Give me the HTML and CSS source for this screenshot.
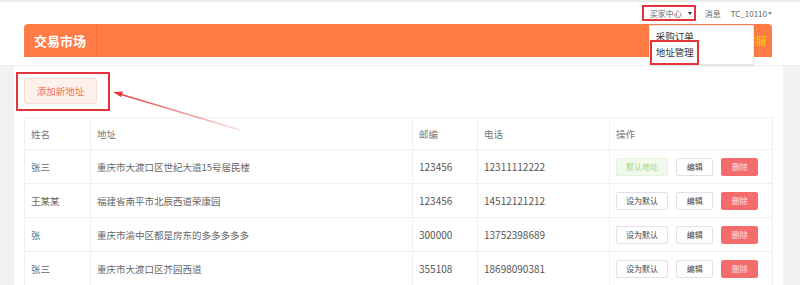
FILE: index.html
```html
<!DOCTYPE html>
<html lang="zh-CN">
<head>
    <meta charset="UTF-8">
    <meta name="viewport" content="width=device-width, initial-scale=1.0">
    <title>地址管理 - 交易市场</title>
    <link rel="stylesheet" href="styles.css">
</head>
<body>
<div class="page">
    <div class="top">
        <div class="topbar">
            <div class="nav-item nav-mark">
                买家中心 <span class="caret"></span>
                <div class="dropdown">
                    <div class="drop-item">采购订单</div>
                    <div class="drop-item drop-mark">地址管理</div>
                </div>
            </div>
            <div class="nav-item">消息</div>
            <div class="nav-item">TC_10110<span class="caret small"></span></div>
        </div>
        <div class="header">
            <div class="header-title">交易市场</div>
            <div class="header-right">联系客服</div>
        </div>
    </div>

    <div class="main">
        <div class="panel">
            <div class="add-mark">
                <button class="btn-add">添加新地址</button>
            </div>

            <table class="address-table">
                <colgroup>
                    <col style="width:66px">
                    <col style="width:322px">
                    <col style="width:65px">
                    <col style="width:132px">
                    <col style="width:163px">
                </colgroup>
                <thead>
                <tr>
                    <th>姓名</th>
                    <th>地址</th>
                    <th>邮编</th>
                    <th>电话</th>
                    <th>操作</th>
                </tr>
                </thead>
                <tbody>
                <tr>
                    <td>张三</td>
                    <td>重庆市大渡口区世纪大道15号居民楼</td>
                    <td class="num">123456</td>
                    <td class="num">12311112222</td>
                    <td class="ops">
                        <button class="btn wide is-default">默认地址</button>
                        <button class="btn">编辑</button>
                        <button class="btn danger">删除</button>
                    </td>
                </tr>
                <tr>
                    <td>王某某</td>
                    <td>福建省南平市北辰西道荣康园</td>
                    <td class="num">123456</td>
                    <td class="num">14512121212</td>
                    <td class="ops">
                        <button class="btn wide">设为默认</button>
                        <button class="btn">编辑</button>
                        <button class="btn danger">删除</button>
                    </td>
                </tr>
                <tr>
                    <td>张</td>
                    <td>重庆市渝中区都是房东的多多多多多</td>
                    <td class="num">300000</td>
                    <td class="num">13752398689</td>
                    <td class="ops">
                        <button class="btn wide">设为默认</button>
                        <button class="btn">编辑</button>
                        <button class="btn danger">删除</button>
                    </td>
                </tr>
                <tr>
                    <td>张三</td>
                    <td>重庆市大渡口区芥园西道</td>
                    <td class="num">355108</td>
                    <td class="num">18698090381</td>
                    <td class="ops">
                        <button class="btn wide">设为默认</button>
                        <button class="btn">编辑</button>
                        <button class="btn danger">删除</button>
                    </td>
                </tr>
                </tbody>
            </table>
        </div>
    </div>

    <!-- annotation arrow -->
    <svg class="arrow" width="800" height="285" viewBox="0 0 800 285">
        <defs>
            <linearGradient id="fade" x1="113" y1="92" x2="240" y2="130" gradientUnits="userSpaceOnUse">
                <stop offset="0" stop-color="#e8383d"/>
                <stop offset="1" stop-color="#e8383d" stop-opacity="0.15"/>
            </linearGradient>
        </defs>
        <line x1="118" y1="93.5" x2="240" y2="130" stroke="url(#fade)" stroke-width="1.4"/>
        <polygon points="113,92 123,91.5 121,97" fill="#e8383d"/>
    </svg>
</div>
</body>
</html>
```

FILE: styles.css
```css
* {
    box-sizing: border-box;
}
body {
    margin: 0;
    font-family: "Noto Sans CJK SC", "Noto Sans", sans-serif;
    background-color: #f2f2f2;
}
.page {
    position: relative;
    width: 800px;
    height: 285px;
    overflow: hidden;
}
.top {
    background-color: #fff;
    border-top: 2px solid #ebebeb;
    padding: 0 28px 8px 24px;
    border-bottom: 1px solid #eeeeee;
}
.topbar {
    display: flex;
    justify-content: flex-end;
    align-items: center;
    height: 22px;
    font-size: 8px;
    color: #666;
}
.nav-item {
    display: flex;
    align-items: center;
    height: 16px;
    margin-left: 10px;
}
.nav-mark {
    position: relative;
    border: 2px solid #e5333a;
    padding: 0 2px 0 6px;
    margin-right: -1px;
}
.caret {
    display: inline-block;
    width: 0;
    height: 0;
    margin-left: 6px;
    border-left: 2px solid transparent;
    border-right: 2px solid transparent;
    border-top: 3px solid #333;
}
.caret.small {
    margin-left: 1px;
    border-top-color: #888;
}
.dropdown {
    position: absolute;
    top: 18px;
    left: 5px;
    width: 105px;
    height: 40px;
    background-color: #fff;
    border: 1px solid #e8e8e8;
    box-shadow: 0 1px 3px rgba(0, 0, 0, 0.08);
    padding-top: 3px;
    z-index: 5;
    font-size: 9.5px;
    color: #333;
}
.drop-item {
    line-height: 14px;
    padding-left: 6px;
}
.drop-mark {
    position: relative;
    margin-top: -3px;
    width: 49px;
    height: 25px;
    line-height: 21px;
    padding-left: 4px;
    border: 2px solid #e5333a;
    background-color: #fff;
}
.header {
    display: flex;
    align-items: center;
    justify-content: space-between;
    height: 33px;
    background-color: #fe7b45;
    border-radius: 4px 4px 0 0;
}
.header-title {
    height: 100%;
    display: flex;
    align-items: center;
    padding: 0 10px;
    width: 73px;
    border-right: 1px solid #f1713e;
    color: #fff;
    font-size: 13px;
    font-weight: bold;
}
.header-right {
    padding-right: 6px;
    font-size: 10px;
    color: #ffd400;
}
.main {
    padding: 0 17px 0 14px;
}
.panel {
    background-color: #fff;
    padding: 6px 11px 20px 10px;
    min-height: 230px;
}
.add-mark {
    display: inline-block;
    margin-left: -8px;
    padding: 4px 11px 5px 6px;
    border: 2px solid #e5333a;
}
.btn-add {
    display: block;
    width: 73px;
    height: 26px;
    font-family: inherit;
    font-size: 9.5px;
    color: #f2734a;
    background-color: #fef0eb;
    border: 1px solid #fcdcd0;
    border-radius: 3px;
    padding: 0;
}
.address-table {
    margin-top: 6px;
    width: 748px;
    border-collapse: collapse;
    table-layout: fixed;
    font-size: 9.5px;
    color: #666;
}
.address-table th,
.address-table td {
    border: 1px solid #eef0f5;
    text-align: left;
    padding: 0 0 0 6px;
    font-weight: normal;
    white-space: nowrap;
}
.address-table th {
    height: 32px;
    color: #777;
}
.address-table td {
    height: 34px;
}
.address-table td.num {
    color: #555;
    font-size: 10px;
}
.btn {
    display: inline-block;
    vertical-align: middle;
    width: 37px;
    height: 18px;
    margin-right: 6px;
    padding: 0;
    font-family: inherit;
    font-size: 8px;
    color: #444;
    background-color: #fff;
    border: 1px solid #dfe1e6;
    border-radius: 2px;
}
.btn.wide {
    width: 52px;
}
.btn.is-default {
    color: #9fd67f;
    background-color: #f0f9eb;
    border-color: #e1f3d8;
}
.btn.danger {
    color: #fde2e2;
    background-color: #f56c6c;
    border-color: #f56c6c;
}
.arrow {
    position: absolute;
    left: 0;
    top: 0;
    pointer-events: none;
    z-index: 4;
}
```
